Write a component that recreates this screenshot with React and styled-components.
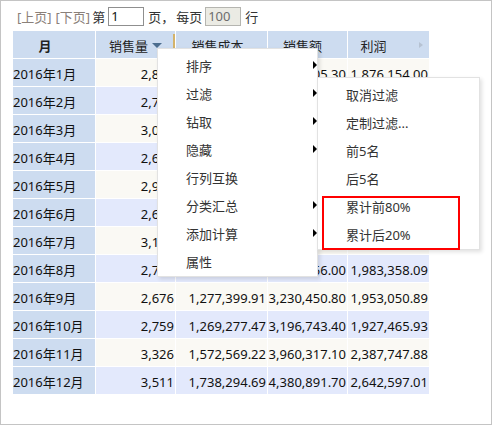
import React from 'react';
import styled, { createGlobalStyle } from 'styled-components';

const GlobalStyle = createGlobalStyle`
  html, body {
    margin: 0;
    padding: 0;
    background: #fff;
  }
  body {
    font-family: "Noto Sans", "Noto Sans CJK SC", sans-serif;
    font-size: 13px;
    color: #111;
  }
`;

const COLS = '83px 80px 92px 80px 82px';

const rows = [
  ['2016年1月', '2,843', '1,362,751.30', '3,238,905.30', '1,876,154.00'],
  ['2016年2月', '2,716', '1,298,433.20', '3,102,554.60', '1,804,121.40'],
  ['2016年3月', '3,058', '1,451,826.75', '3,642,310.50', '2,190,483.75'],
  ['2016年4月', '2,634', '1,250,318.42', '3,081,972.90', '1,831,654.48'],
  ['2016年5月', '2,917', '1,395,604.18', '3,456,209.70', '2,060,605.52'],
  ['2016年6月', '2,689', '1,284,117.63', '3,170,882.40', '1,886,764.77'],
  ['2016年7月', '3,142', '1,503,275.90', '3,760,148.20', '2,256,872.30'],
  ['2016年8月', '2,731', '1,302,497.91', '3,285,856.00', '1,983,358.09'],
  ['2016年9月', '2,676', '1,277,399.91', '3,230,450.80', '1,953,050.89'],
  ['2016年10月', '2,759', '1,269,277.47', '3,196,743.40', '1,927,465.93'],
  ['2016年11月', '3,326', '1,572,569.22', '3,960,317.10', '2,387,747.88'],
  ['2016年12月', '3,511', '1,738,294.69', '4,380,891.70', '2,642,597.01'],
];

const menuItems = [
  { label: '排序', sub: true },
  { label: '过滤', sub: true },
  { label: '钻取', sub: true },
  { label: '隐藏', sub: true },
  { label: '行列互换' },
  { label: '分类汇总', sub: true },
  { label: '添加计算', sub: true },
  { label: '属性' },
];

const filterItems = ['取消过滤', '定制过滤...', '前5名', '后5名', '累计前80%', '累计后20%'];

const Page = styled.div`
  position: relative;
  box-sizing: border-box;
  width: 492px;
  height: 425px;
  border: 1px solid #c4c4c4;
  padding-left: 12px;
`;

const Toolbar = styled.div`
  display: flex;
  align-items: center;
  height: 30px;
  padding-left: 4px;
  color: #333;
  white-space: nowrap;
`;

const PageLink = styled.span`
  color: #8a8079;
  margin-right: ${p => p.$mr || 0}px;
`;

const Label = styled.span`
  margin: 0 ${p => p.$mr || 0}px 0 ${p => p.$ml || 0}px;
`;

const PageInput = styled.div`
  box-sizing: border-box;
  width: 36px;
  height: 19px;
  line-height: 17px;
  padding-left: 2px;
  border: 1px solid ${p => (p.$disabled ? '#b5b5b0' : '#8f8f8f')};
  background: ${p => (p.$disabled ? '#ebebe4' : '#fff')};
  color: ${p => (p.$disabled ? '#6d6d6d' : '#111')};
`;

const Grid = styled.div`
  width: 417px;
`;

const Row = styled.div`
  display: grid;
  grid-template-columns: ${COLS};
  height: 28px;
`;

const Cell = styled.div`
  position: relative;
  box-sizing: border-box;
  height: 28px;
  padding-top: 4px;
  line-height: 23px;
  border-right: 1px solid #fff;
  border-bottom: 1px solid #fff;
  overflow: hidden;
  white-space: nowrap;
`;

const HeadCell = styled(Cell)`
  background: #cddcf0;
  text-align: center;
  color: #222;
  padding-right: ${p => p.$pr || 0}px;
  font-weight: ${p => (p.$bold ? 700 : 400)};
`;

const RowHead = styled(Cell)`
  background: #cddcf0;
`;

const DataCell = styled(Cell)`
  background: ${p => (p.$alt ? '#e3e9fc' : '#faf9f4')};
  text-align: right;
  padding-right: 1px;
`;

const SortMark = styled.span`
  display: inline-block;
  width: 0;
  height: 0;
  margin-left: 4px;
  vertical-align: 3px;
  border-left: 5px solid transparent;
  border-right: 5px solid transparent;
  border-top: 5px solid #4c6d8e;
`;

const ResizeBar = styled.span`
  position: absolute;
  right: 0;
  top: 3px;
  width: 2px;
  height: 22px;
  background: #d3b36b;
`;

const MoreMark = styled.span`
  position: absolute;
  right: 6px;
  top: 11px;
  width: 0;
  height: 0;
  border-top: 3.5px solid transparent;
  border-bottom: 3.5px solid transparent;
  border-left: 4px solid #b6c2d2;
`;

const Menu = styled.div`
  position: absolute;
  left: ${p => p.$left}px;
  top: ${p => p.$top}px;
  width: ${p => p.$width}px;
  box-sizing: border-box;
  padding: 3px 0 ${p => p.$pb || 0}px;
  background: #fff;
  border: 1px solid #e2e2e2;
  box-shadow: 2px 2px 4px rgba(0, 0, 0, 0.12);
  color: #333;
`;

const MenuItem = styled.div`
  position: relative;
  height: 28px;
  line-height: 29px;
  padding-left: 28px;
  white-space: nowrap;
`;

const SubArrow = styled.span`
  position: absolute;
  right: 0;
  top: 9px;
  width: 0;
  height: 0;
  border-top: 4px solid transparent;
  border-bottom: 4px solid transparent;
  border-left: 4px solid #000;
`;

const Highlight = styled.div`
  position: absolute;
  left: 4px;
  top: 118px;
  width: 138px;
  height: 54px;
  box-sizing: border-box;
  border: 2px solid #f00;
`;

export default function App() {
  return (
    <>
      <GlobalStyle />
      <Page>
        <Toolbar>
          <PageLink $mr={4}>[上页]</PageLink>
          <PageLink>[下页]</PageLink>
          <Label $ml={2} $mr={3}>第</Label>
          <PageInput>1</PageInput>
          <Label $ml={4} $mr={2}>页，</Label>
          <Label $mr={3}>每页</Label>
          <PageInput $disabled>100</PageInput>
          <Label $ml={4}>行</Label>
        </Toolbar>

        <Grid>
          <Row>
            <HeadCell $pr={18} $bold>月</HeadCell>
            <HeadCell>
              销售量<SortMark />
              <ResizeBar />
            </HeadCell>
            <HeadCell $pr={8}>销售成本</HeadCell>
            <HeadCell $pr={10}>销售额</HeadCell>
            <HeadCell $pr={30}>
              利润
              <MoreMark />
            </HeadCell>
          </Row>
          {rows.map((r, i) => (
            <Row key={r[0]}>
              <RowHead>{r[0]}</RowHead>
              {r.slice(1).map((v, j) => (
                <DataCell key={j} $alt={i % 2 === 1}>{v}</DataCell>
              ))}
            </Row>
          ))}
        </Grid>

        <Menu $left={156} $top={47} $width={161}>
          {menuItems.map(m => (
            <MenuItem key={m.label}>
              {m.label}
              {m.sub && <SubArrow />}
            </MenuItem>
          ))}
        </Menu>

        <Menu $left={316} $top={76} $width={163}>
          {filterItems.map(f => (
            <MenuItem key={f}>{f}</MenuItem>
          ))}
          <Highlight />
        </Menu>
      </Page>
    </>
  );
}
